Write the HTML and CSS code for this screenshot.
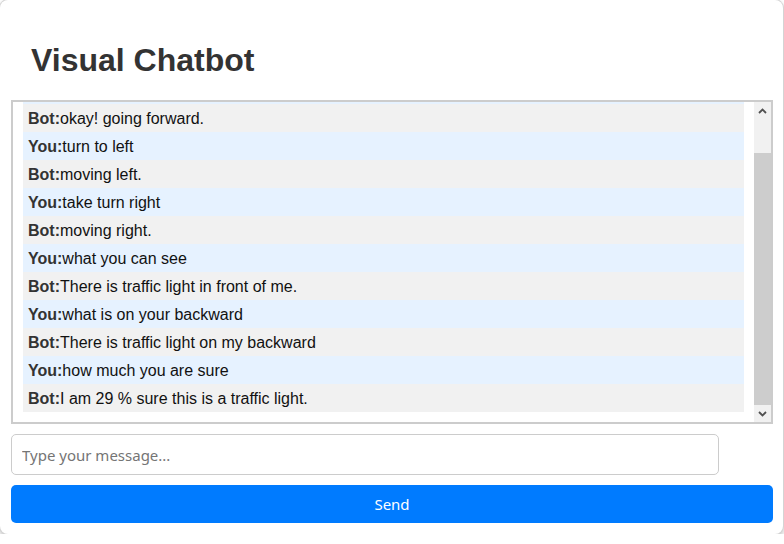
FILE: index.html
```html
<!DOCTYPE html>
<html>
<head>
<meta charset="utf-8">
<title>Visual Chatbot</title>
<link rel="stylesheet" href="styles.css">
</head>
<body>
<div class="container">
  <h1 class="title">Visual Chatbot</h1>
  <div class="chat-box">
    <div class="messages" id="chat">
      <div class="msg you"><b>You:</b>go forward</div>
      <div class="msg bot"><b>Bot:</b>okay! going forward.</div>
      <div class="msg you"><b>You:</b>turn to left</div>
      <div class="msg bot"><b>Bot:</b>moving left.</div>
      <div class="msg you"><b>You:</b>take turn right</div>
      <div class="msg bot"><b>Bot:</b>moving right.</div>
      <div class="msg you"><b>You:</b>what you can see</div>
      <div class="msg bot"><b>Bot:</b>There is traffic light in front of me.</div>
      <div class="msg you"><b>You:</b>what is on your backward</div>
      <div class="msg bot"><b>Bot:</b>There is traffic light on my backward</div>
      <div class="msg you"><b>You:</b>how much you are sure</div>
      <div class="msg bot"><b>Bot:</b>I am 29 % sure this is a traffic light.</div>
    </div>
    <div class="scrollbar">
      <div class="sb-btn">
        <svg width="9" height="6" viewBox="0 0 9 6"><path d="M1 5 L4.5 1.5 L8 5" fill="none" stroke="#505050" stroke-width="1.8"/></svg>
      </div>
      <div class="sb-track"></div>
      <div class="sb-thumb"></div>
      <div class="sb-btn">
        <svg width="9" height="6" viewBox="0 0 9 6"><path d="M1 1 L4.5 4.5 L8 1" fill="none" stroke="#505050" stroke-width="1.8"/></svg>
      </div>
    </div>
  </div>
  <input class="input" type="text" placeholder="Type your message...">
  <button class="send">Send</button>
</div>
<script src="script.js"></script>
</body>
</html>
```

FILE: styles.css
```css
html, body {
  margin: 0;
  padding: 0;
  background: #ffffff;
}
body {
  font-family: "Liberation Sans", Arial, sans-serif;
}
.container {
  width: 783px;
  height: 534px;
  box-sizing: border-box;
  padding: 11px 10px 10px 11px;
  background: #fff;
  border-radius: 8px;
  box-shadow: 0 0 0 1px #d4d4d4, 0 3px 6px rgba(0,0,0,0.3);
  display: flex;
  flex-direction: column;
}
.title {
  margin: 0 0 20px 0;
  padding: 31px 20px 2px 20px;
  font-size: 32px;
  line-height: 36px;
  font-weight: bold;
  color: #333;
}
.chat-box {
  height: 324px;
  box-sizing: border-box;
  border: 2px solid #cccccc;
  display: flex;
  flex: none;
}
.messages {
  flex: 1;
  min-width: 0;
  padding: 10px;
  overflow: hidden;
}
.scrollbar {
  width: 17px;
  flex: none;
  display: flex;
  flex-direction: column;
  background: #f1f1f1;
}
.sb-btn {
  height: 17px;
  flex: none;
  display: flex;
  align-items: center;
  justify-content: center;
}
.sb-track {
  height: 34px;
  flex: none;
}
.sb-thumb {
  flex: 1;
  background: #cdcdcd;
}
.msg {
  padding: 6px 5px 4px 5px;
  font-size: 16px;
  line-height: 18px;
  color: #111;
}
.msg b {
  color: #333;
}
.bot {
  background: #f1f1f1;
}
.you {
  background: #e6f2ff;
}
.input {
  margin-top: 10px;
  width: 708px;
  height: 41px;
  box-sizing: border-box;
  padding: 10px;
  border: 1px solid #cccccc;
  border-radius: 5px;
  font-family: "Noto Sans", "Open Sans", sans-serif;
  font-size: 15px;
  outline: none;
}
.input::placeholder {
  color: #757575;
}
.send {
  margin-top: 10px;
  width: 762px;
  height: 38px;
  border: none;
  border-radius: 5px;
  background: #007bff;
  color: #fff;
  font-family: "Noto Sans", "Open Sans", sans-serif;
  font-size: 15px;
  padding: 0;
}
```

FILE: script.js
```js
var c = document.getElementById('chat');
c.scrollTop = c.scrollHeight;
```
